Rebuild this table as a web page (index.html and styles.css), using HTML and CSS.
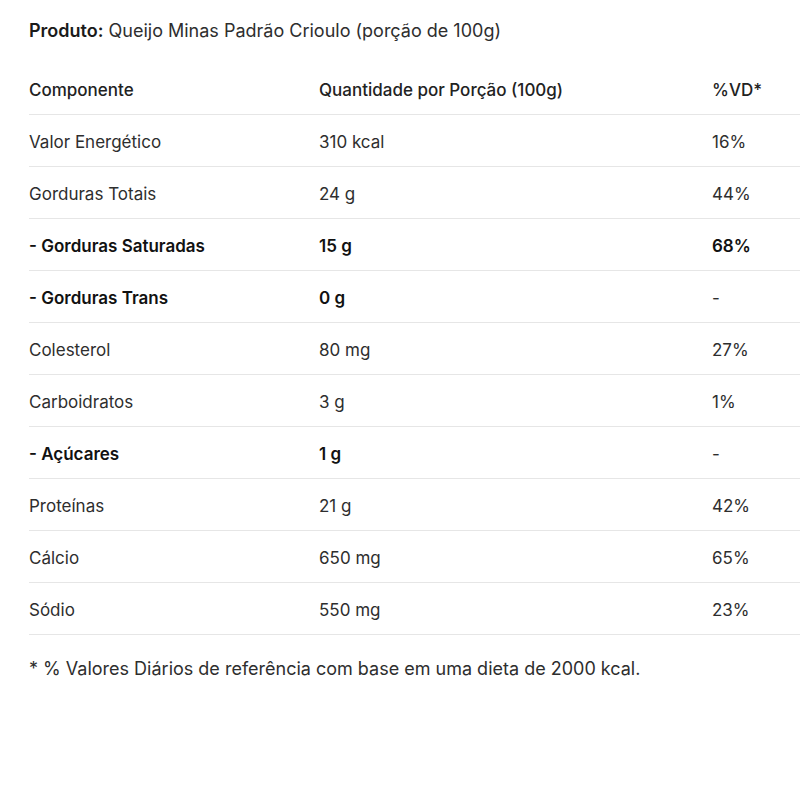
FILE: index.html
```html
<!DOCTYPE html>
<html lang="pt">
<head>
<meta charset="utf-8">
<link rel="stylesheet" href="styles.css">
</head>
<body>
<div class="page">
  <p class="product"><strong>Produto:</strong> Queijo Minas Padrão Crioulo (porção de 100g)</p>
  <table class="nutri">
    <thead>
      <tr><th class="c1">Componente</th><th class="c2">Quantidade por Porção (100g)</th><th class="c3">%VD*</th></tr>
    </thead>
    <tbody>
      <tr><td>Valor Energético</td><td>310 kcal</td><td>16%</td></tr>
      <tr><td>Gorduras Totais</td><td>24 g</td><td>44%</td></tr>
      <tr class="bold"><td>- Gorduras Saturadas</td><td>15 g</td><td>68%</td></tr>
      <tr class="bold"><td>- Gorduras Trans</td><td>0 g</td><td class="dash">-</td></tr>
      <tr><td>Colesterol</td><td>80 mg</td><td>27%</td></tr>
      <tr><td>Carboidratos</td><td>3 g</td><td>1%</td></tr>
      <tr class="bold"><td>- Açúcares</td><td>1 g</td><td class="dash">-</td></tr>
      <tr><td>Proteínas</td><td>21 g</td><td>42%</td></tr>
      <tr><td>Cálcio</td><td>650 mg</td><td>65%</td></tr>
      <tr><td>Sódio</td><td>550 mg</td><td>23%</td></tr>
    </tbody>
  </table>
  <p class="note">* % Valores Diários de referência com base em uma dieta de 2000 kcal.</p>
</div>
</body>
</html>
```

FILE: styles.css
```css
html, body {
  margin: 0;
  padding: 0;
  background: #ffffff;
}
body {
  font-family: "Inter", "Liberation Sans", sans-serif;
  color: #2e2e2e;
  font-size: 17px;
  overflow: hidden;
}
.page {
  padding: 20px 0 0 29px;
}
.product {
  margin: 0;
  font-size: 18px;
  line-height: 22px;
}
.product strong {
  font-weight: 600;
  color: #1a1a1a;
}
.nutri {
  margin-top: 21px;
  width: 771px;
  border-collapse: collapse;
  font-size: 17px;
}
.nutri th, .nutri td {
  text-align: left;
  padding: 17px 0 13px 0;
  line-height: 21px;
  border-bottom: 1px solid #e6e6e6;
}
.nutri th {
  font-weight: 500;
  color: #222;
}
.c1 { width: 290px; }
.c2 { width: 393px; }
.bold td {
  font-weight: 600;
  color: #111;
}
.bold td.dash { font-weight: 400; color: #2e2e2e; }
.note {
  margin: 23px 0 0 0;
  font-size: 18px;
  line-height: 22px;
}
```
